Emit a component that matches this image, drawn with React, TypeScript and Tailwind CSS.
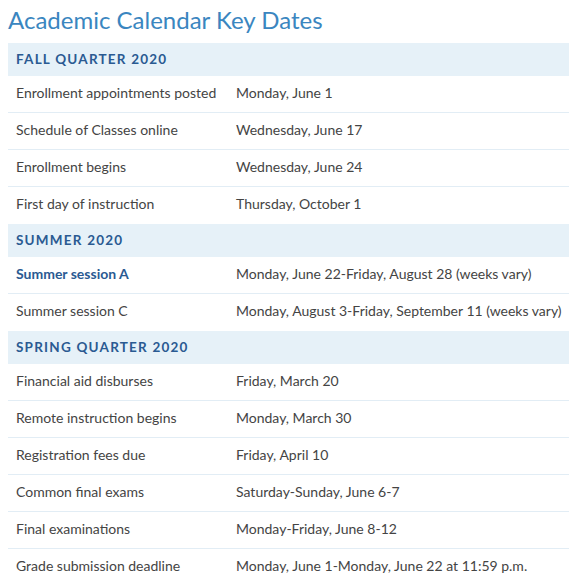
const sections = [
  {
    title: "FALL QUARTER 2020",
    rows: [
      ["Enrollment appointments posted", "Monday, June 1"],
      ["Schedule of Classes online", "Wednesday, June 17"],
      ["Enrollment begins", "Wednesday, June 24"],
      ["First day of instruction", "Thursday, October 1"],
    ],
  },
  {
    title: "SUMMER 2020",
    rows: [
      ["Summer session A", "Monday, June 22-Friday, August 28 (weeks vary)", true],
      ["Summer session C", "Monday, August 3-Friday, September 11 (weeks vary)"],
    ],
  },
  {
    title: "SPRING QUARTER 2020",
    rows: [
      ["Financial aid disburses", "Friday, March 20"],
      ["Remote instruction begins", "Monday, March 30"],
      ["Registration fees due", "Friday, April 10"],
      ["Common final exams", "Saturday-Sunday, June 6-7"],
      ["Final examinations", "Monday-Friday, June 8-12"],
      ["Grade submission deadline", "Monday, June 1-Monday, June 22 at 11:59 p.m."],
    ],
  },
];

export default function App() {
  return (
    <div className="w-[569px] h-[581px] overflow-hidden bg-white pl-2 font-['Lato',sans-serif] text-[#444]">
      <h1 className="h-[43px] pt-[1px] text-[24px] leading-[38px] text-[#3a86c0]">
        Academic Calendar Key Dates
      </h1>
      <div className="text-[14px]">
        {sections.map((s) => (
          <div key={s.title}>
            <div className="flex h-[33px] items-center bg-[#e6f1f8] px-2 pb-[1px] text-[13.5px] font-bold tracking-[0.09em] text-[#2a5a92]">
              {s.title}
            </div>
            {s.rows.map((r, i) => (
              <div
                key={r[0] as string}
                className={`flex h-[37px] items-center pb-[4px] ${i < s.rows.length - 1 ? "border-b border-[#e2edf5]" : ""}`}
              >
                <div className={`w-[228px] shrink-0 pl-2 ${r[2] ? "font-bold text-[#2a5a92]" : ""}`}>{r[0]}</div>
                <div>{r[1]}</div>
              </div>
            ))}
          </div>
        ))}
      </div>
    </div>
  );
}
